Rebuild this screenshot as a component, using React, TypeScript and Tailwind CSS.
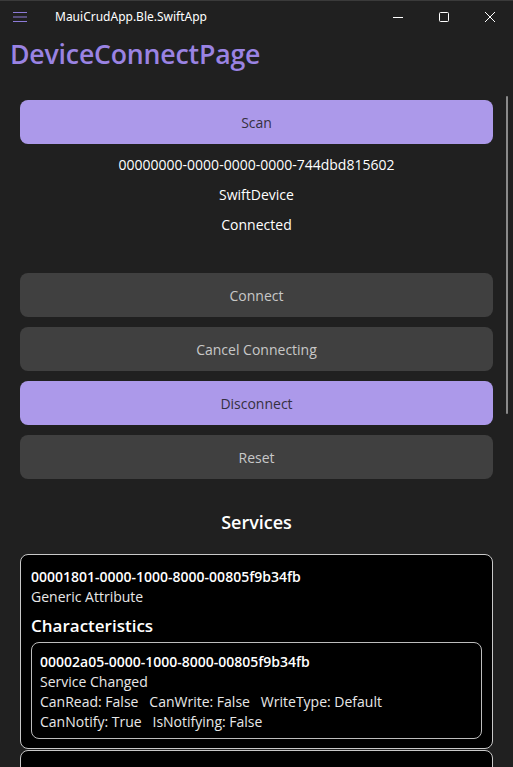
import React from "react";

const font = { fontFamily: '"Open Sans", "Noto Sans", sans-serif' };

function Btn({ label, primary }: { label: string; primary?: boolean }) {
  return (
    <div
      className={
        "h-[44px] rounded-[8px] flex items-center justify-center text-[14px] " +
        (primary ? "bg-[#ac99ea] text-[#353040]" : "bg-[#404040] text-[#c8c8c8]")
      }
    >
      {label}
    </div>
  );
}

export default function App() {
  return (
    <div className="w-[513px] h-[767px] bg-[#202020] text-white overflow-hidden relative" style={font}>
      {/* title bar */}
      <div className="h-[32px] flex items-center border-t border-[#3a3a3a]">
        <div className="w-[55px] pl-[12px] flex items-center">
          <svg width="16" height="12" viewBox="0 0 16 12">
            <path d="M1 1.5h14M1 6h14M1 10.5h14" stroke="#8d7bd8" strokeWidth="1.2" />
          </svg>
        </div>
        <div className="text-[12px] text-white flex-1" style={{ fontFamily: '"Noto Sans", "Open Sans", sans-serif' }}>
          MauiCrudApp.Ble.SwiftApp
        </div>
        <div className="flex items-center">
          <div className="w-[46px] flex justify-center">
            <svg width="10" height="10" viewBox="0 0 10 10">
              <path d="M0 5.5h10" stroke="#ffffff" strokeWidth="1" />
            </svg>
          </div>
          <div className="w-[46px] flex justify-center">
            <svg width="10" height="10" viewBox="0 0 10 10">
              <rect x="0.5" y="0.5" width="9" height="9" rx="1" fill="none" stroke="#ffffff" strokeWidth="1" />
            </svg>
          </div>
          <div className="w-[46px] flex justify-center">
            <svg width="10" height="10" viewBox="0 0 10 10">
              <path d="M0 0L10 10M10 0L0 10" stroke="#ffffff" strokeWidth="1" />
            </svg>
          </div>
        </div>
      </div>

      {/* page heading */}
      <div className="pl-[10px] h-[44px] flex items-center">
        <div className="text-[26.7px] font-semibold text-[#9a83e3] leading-none tracking-[-0.2px]">DeviceConnectPage</div>
      </div>

      {/* scrollbar */}
      <div className="absolute left-[506px] top-[96px] w-[2px] h-[318px] bg-[#8a8a8a] rounded-full" />

      <div className="px-[20px] pt-[24px] w-[513px]">
        <Btn label="Scan" primary />
        <div className="flex flex-col items-center text-[14px] text-white mt-[5px]">
          <div className="h-[30px] flex items-center">00000000-0000-0000-0000-744dbd815602</div>
          <div className="h-[30px] flex items-center">SwiftDevice</div>
          <div className="h-[30px] flex items-center">Connected</div>
        </div>
        <div className="flex flex-col gap-[10px] mt-[34px]">
          <Btn label="Connect" />
          <Btn label="Cancel Connecting" />
          <Btn label="Disconnect" primary />
          <Btn label="Reset" />
        </div>
        <div className="text-center text-[18px] font-semibold mt-[30px] leading-[26px]">Services</div>
        <div className="mt-[19px] bg-black border border-[#c8c8c8] rounded-[8px] px-[10px] pt-[12px] pb-[9px]">
          <div className="text-[14px] font-semibold leading-[20px]">00001801-0000-1000-8000-00805f9b34fb</div>
          <div className="text-[14px] leading-[20px] text-[#e8e8e8]">Generic Attribute</div>
          <div className="text-[17px] font-semibold leading-[24px] mt-[7px]">Characteristics</div>
          <div className="mt-[4px] border border-[#bdbdbd] rounded-[8px] px-[8px] pt-[9px] pb-[6px] text-[14px] leading-[20px]">
            <div className="font-semibold">00002a05-0000-1000-8000-00805f9b34fb</div>
            <div className="text-[#e8e8e8]">Service Changed</div>
            <div className="text-[#e8e8e8] whitespace-pre">CanRead: False   CanWrite: False   WriteType: Default</div>
            <div className="text-[#e8e8e8] whitespace-pre">CanNotify: True   IsNotifying: False</div>
          </div>
        </div>
        <div className="mt-[1px] bg-black border border-[#c8c8c8] rounded-[8px] h-[60px]" />
      </div>
    </div>
  );
}
